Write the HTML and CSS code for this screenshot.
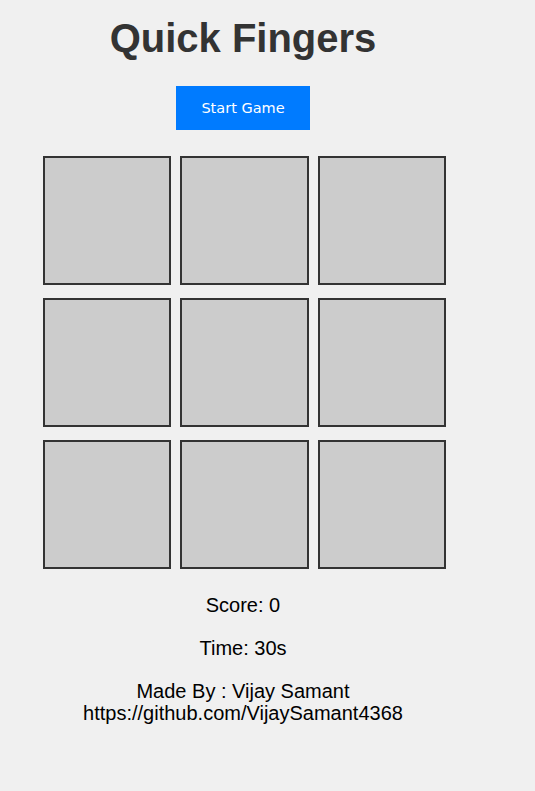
FILE: index.html
```html
<!DOCTYPE html>
<html>
<head>
<meta charset="utf-8">
<link rel="stylesheet" href="styles.css">
</head>
<body>
<div class="app">
  <h1 class="title">Quick Fingers</h1>
  <button class="start">Start Game</button>
  <div class="grid">
    <div class="tile"></div><div class="tile"></div><div class="tile"></div>
    <div class="tile"></div><div class="tile"></div><div class="tile"></div>
    <div class="tile"></div><div class="tile"></div><div class="tile"></div>
  </div>
  <p class="stat">Score: 0</p>
  <p class="stat">Time: 30s</p>
  <p class="credit">Made By : Vijay Samant<br>https://github.com/VijaySamant4368</p>
</div>
</body>
</html>
```
FILE: styles.css
```css
html, body {
  background: #f0f0f0;
}
body {
  margin: 8px;
  font-family: "Liberation Sans", Arial, sans-serif;
  color: #000;
}
.app {
  width: 470px;
  display: flex;
  flex-direction: column;
  align-items: center;
}
.title {
  font-size: 40px;
  font-weight: bold;
  color: #333;
  margin: 7px 0 25px;
  line-height: 46px;
}
.start {
  width: 134px;
  height: 44px;
  background: #007bff;
  color: #fff;
  border: none;
  font-family: "DejaVu Sans", Tahoma, sans-serif;
  font-size: 14.5px;
  cursor: pointer;
}
.grid {
  display: grid;
  grid-template-columns: repeat(3, 128.5px);
  column-gap: 9.2px;
  row-gap: 13.5px;
  margin: 26px 0 0 3px;
}
.tile {
  width: 124.5px;
  height: 124.5px;
  background: #ccc;
  border: 2px solid #333;
}
.stat {
  font-size: 20px;
  margin: 25px 0 0;
  line-height: 23px;
}
.stat + .stat {
  margin-top: 20px;
}
.credit {
  font-size: 20px;
  line-height: 22px;
  margin: 20px 0 0;
  text-align: center;
}
```
